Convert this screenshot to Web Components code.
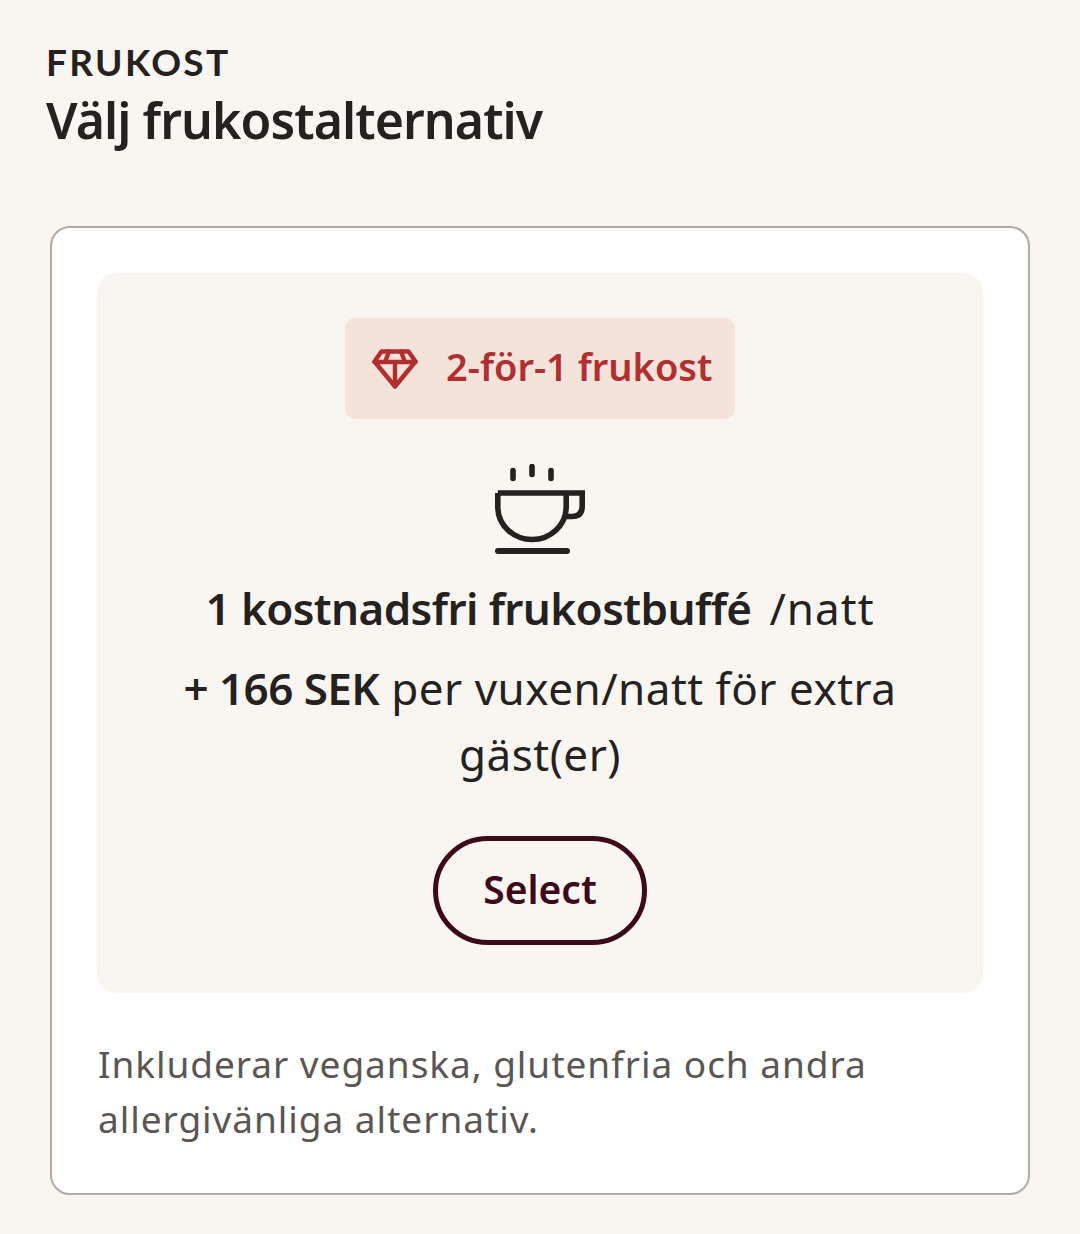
<!DOCTYPE html>
<html lang="sv">
<head>
<meta charset="utf-8">
<title>Frukost</title>
<style>
  html, body { margin: 0; background: #f9f6f2; }
  body { font-family: "Noto Sans", sans-serif; color: #25211e; }
</style>
</head>
<body>
<breakfast-page>
  <section-heading eyebrow="FRUKOST" title="Välj frukostalternativ"></section-heading>
  <option-card note="Inkluderar veganska, glutenfria och andra allergivänliga alternativ.">
    <offer-badge>2-för-1 frukost</offer-badge>
    <coffee-icon></coffee-icon>
    <offer-line><b>1 kostnadsfri frukostbuffé</b><span class="per">/natt</span></offer-line>
    <offer-extra><b>+ 166 SEK</b> per vuxen/natt för extra gäst(er)</offer-extra>
    <select-button>Select</select-button>
  </option-card>
</breakfast-page>

<script>
class BreakfastPage extends HTMLElement {
  constructor() {
    super();
    this.attachShadow({ mode: "open" });
    this.shadowRoot.innerHTML = `
      <style>
        :host { display: block; padding: 40px 50px 0; box-sizing: border-box; height: 1234px; }
      </style>
      <slot></slot>
    `;
  }
}

class SectionHeading extends HTMLElement {
  constructor() {
    super();
    this.attachShadow({ mode: "open" });
  }

  connectedCallback() {
    this.shadowRoot.innerHTML = `
      <style>
        :host { display: block; margin: -1px 0 71px -4px; }
        .eyebrow {
          font-family: "Lato", sans-serif;
          font-size: 37px;
          font-weight: 700;
          line-height: 46px;
          letter-spacing: 2.3px;
        }
        h2 {
          font-family: "Noto Sans", sans-serif;
          font-size: 50px;
          font-weight: 600;
          line-height: 70px;
          margin: 0;
          letter-spacing: -0.9px;
        }
      </style>
      <div class="eyebrow">${this.getAttribute("eyebrow")}</div>
      <h2>${this.getAttribute("title")}</h2>
    `;
  }
}

class OptionCard extends HTMLElement {
  constructor() {
    super();
    this.attachShadow({ mode: "open" });
  }

  connectedCallback() {
    this.shadowRoot.innerHTML = `
      <style>
        :host {
          display: block;
          background: #fff;
          border: 2px solid #b1aaa0;
          border-radius: 20px;
          padding: 45px;
          height: 969px;
          box-sizing: border-box;
        }
        .panel {
          background: #f9f6f2;
          border-radius: 20px;
          height: 720px;
          box-sizing: border-box;
          padding: 45px 60px 0;
          display: flex;
          flex-direction: column;
          align-items: center;
          text-align: center;
        }
        .note {
          margin: 43px 0 0 1px;
          font-size: 37px;
          line-height: 55px;
          color: #5a5653;
          letter-spacing: 0.95px;
        }
      </style>
      <div class="panel"><slot></slot></div>
      <p class="note">${this.getAttribute("note")}</p>
    `;
  }
}

class OfferBadge extends HTMLElement {
  constructor() {
    super();
    this.attachShadow({ mode: "open" }).innerHTML = `
      <style>
        :host {
          display: flex;
          align-items: center;
          gap: 28px;
          box-sizing: border-box;
          width: 390px;
          height: 101px;
          padding: 0 0 0 27px;
          background: #f4e3db;
          border-radius: 10px;
          color: #b12f31;
          font-size: 38px;
          font-weight: 600;
          white-space: nowrap;
        }
        svg { width: 46px; height: 40px; flex: none; }
        span { position: relative; top: -3px; }
      </style>
      <svg viewBox="0 0 46 40" fill="none" stroke="currentColor" stroke-width="4.4" stroke-linejoin="round" stroke-linecap="round">
        <path d="M9.5 2.5H36.5L43.5 12.5L23 37.5L2.5 12.5Z"/>
        <path d="M2.5 13H43.5M17 2.5L13 13M29 2.5L33 13M23 13V37"/>
      </svg>
      <span><slot></slot></span>
    `;
  }
}

class CoffeeIcon extends HTMLElement {
  constructor() {
    super();
    this.attachShadow({ mode: "open" }).innerHTML = `
      <style>
        :host { display: block; width: 92px; height: 90px; margin-top: 45px; }
        svg { display: block; width: 92px; height: 90px; }
      </style>
      <svg viewBox="0 0 92 90" fill="none" stroke="#25211e" stroke-width="5.6">
        <path d="M3.8 29H88.2V42Q88.2 52.5 78 52.5H70"/>
        <path d="M3.8 29V43A34.2 32.5 0 0 0 72.2 43V29"/>
        <path d="M19 6.5V14.5M38 2.5V10.5M57 6.5V14.5" stroke-linecap="round"/>
        <path d="M4 87H73" stroke-width="6" stroke-linecap="round"/>
      </svg>
    `;
  }
}

class OfferLine extends HTMLElement {
  constructor() {
    super();
    this.attachShadow({ mode: "open" }).innerHTML = `
      <style>
        :host {
          display: block;
          margin-top: 22px;
          font-size: 44px;
          line-height: 64px;
          letter-spacing: 0.4px;
          white-space: nowrap;
        }
        ::slotted(b) { font-weight: 600; letter-spacing: -0.6px; }
        ::slotted(.per) { margin-left: 18px; letter-spacing: 1px; }
      </style>
      <slot></slot>
    `;
  }
}

class OfferExtra extends HTMLElement {
  constructor() {
    super();
    this.attachShadow({ mode: "open" }).innerHTML = `
      <style>
        :host {
          display: block;
          margin-top: 15px;
          width: 740px;
          font-size: 44px;
          line-height: 66px;
          letter-spacing: 0.5px;
        }
        ::slotted(b) { font-weight: 600; letter-spacing: -0.55px; }
      </style>
      <slot></slot>
    `;
  }
}

class SelectButton extends HTMLElement {
  constructor() {
    super();
    this.attachShadow({ mode: "open" }).innerHTML = `
      <style>
        :host {
          display: flex;
          align-items: center;
          justify-content: center;
          box-sizing: border-box;
          width: 214px;
          height: 109px;
          margin-top: 49px;
          border: 5px solid #3d0a1a;
          border-radius: 55px;
          color: #3d0a1a;
          font-size: 39px;
          font-weight: 600;
          padding-bottom: 4px;
        }
      </style>
      <slot></slot>
    `;
  }
}

customElements.define("breakfast-page", BreakfastPage);
customElements.define("section-heading", SectionHeading);
customElements.define("option-card", OptionCard);
customElements.define("offer-badge", OfferBadge);
customElements.define("coffee-icon", CoffeeIcon);
customElements.define("offer-line", OfferLine);
customElements.define("offer-extra", OfferExtra);
customElements.define("select-button", SelectButton);
</script>
</body>
</html>
